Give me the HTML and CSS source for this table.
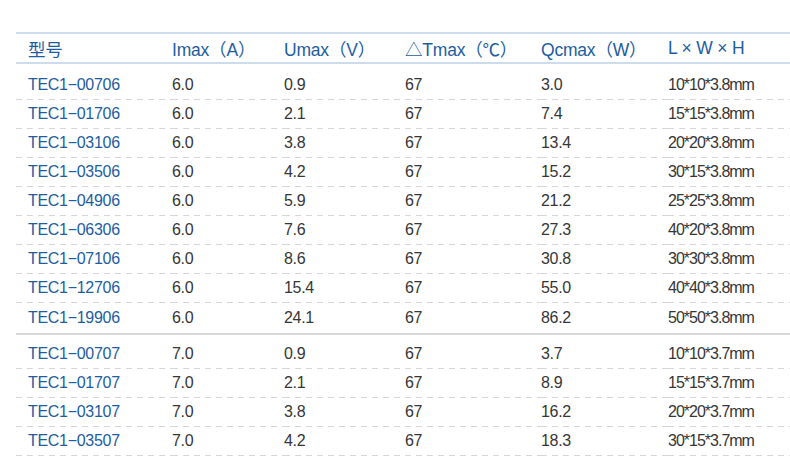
FILE: index.html
```html
<!DOCTYPE html>
<html lang="zh">
<head>
<meta charset="utf-8">
<title>TEC1 参数表</title>
<link rel="stylesheet" href="styles.css">
</head>
<body>
<table class="spec">
  <colgroup>
    <col class="c1"><col class="c2"><col class="c3"><col class="c4"><col class="c5"><col class="c6">
  </colgroup>
  <thead>
    <tr>
      <th>型号</th>
      <th>Imax（A）</th>
      <th>Umax（V）</th>
      <th>△Tmax（℃）</th>
      <th>Qcmax（W）</th>
      <th>L × W × H</th>
    </tr>
  </thead>
  <tbody class="group">
    <tr><td>TEC1−00706</td><td>6.0</td><td>0.9</td><td>67</td><td>3.0</td><td class="size">10*10*3.8mm</td></tr>
    <tr><td>TEC1−01706</td><td>6.0</td><td>2.1</td><td>67</td><td>7.4</td><td class="size">15*15*3.8mm</td></tr>
    <tr><td>TEC1−03106</td><td>6.0</td><td>3.8</td><td>67</td><td>13.4</td><td class="size">20*20*3.8mm</td></tr>
    <tr><td>TEC1−03506</td><td>6.0</td><td>4.2</td><td>67</td><td>15.2</td><td class="size">30*15*3.8mm</td></tr>
    <tr><td>TEC1−04906</td><td>6.0</td><td>5.9</td><td>67</td><td>21.2</td><td class="size">25*25*3.8mm</td></tr>
    <tr><td>TEC1−06306</td><td>6.0</td><td>7.6</td><td>67</td><td>27.3</td><td class="size">40*20*3.8mm</td></tr>
    <tr><td>TEC1−07106</td><td>6.0</td><td>8.6</td><td>67</td><td>30.8</td><td class="size">30*30*3.8mm</td></tr>
    <tr><td>TEC1−12706</td><td>6.0</td><td>15.4</td><td>67</td><td>55.0</td><td class="size">40*40*3.8mm</td></tr>
    <tr><td>TEC1−19906</td><td>6.0</td><td>24.1</td><td>67</td><td>86.2</td><td class="size">50*50*3.8mm</td></tr>
  </tbody>
  <tbody class="group">
    <tr><td>TEC1−00707</td><td>7.0</td><td>0.9</td><td>67</td><td>3.7</td><td class="size">10*10*3.7mm</td></tr>
    <tr><td>TEC1−01707</td><td>7.0</td><td>2.1</td><td>67</td><td>8.9</td><td class="size">15*15*3.7mm</td></tr>
    <tr><td>TEC1−03107</td><td>7.0</td><td>3.8</td><td>67</td><td>16.2</td><td class="size">20*20*3.7mm</td></tr>
    <tr><td>TEC1−03507</td><td>7.0</td><td>4.2</td><td>67</td><td>18.3</td><td class="size">30*15*3.7mm</td></tr>
  </tbody>
</table>
</body>
</html>
```
FILE: styles.css
```css
html, body {
  margin: 0;
  padding: 0;
  background: #ffffff;
}

body {
  padding-top: 32px;
  font-family: "Liberation Sans", Arial, "Noto Sans CJK SC", sans-serif;
}

.spec {
  margin-left: 16px;
  width: 774px;
  border-collapse: collapse;
  table-layout: fixed;
}

.c1 { width: 156px; }
.c2 { width: 112px; }
.c3 { width: 121px; }
.c4 { width: 136px; }
.c5 { width: 127px; }
.c6 { width: 122px; }

.spec thead th {
  border-top: 2px solid #cddcec;
  border-bottom: 2px solid #cddcec;
  height: 27px;
  padding: 1px 0 0 0;
  text-align: left;
  font-weight: normal;
  font-size: 17.5px;
  letter-spacing: -0.2px;
  color: #1d5da2;
  white-space: nowrap;
  vertical-align: middle;
}

.spec thead th:first-child,
.spec tbody td:first-child {
  padding-left: 12px;
}

.spec tbody td {
  height: 28px;
  padding: 0;
  font-size: 16px;
  letter-spacing: -0.3px;
  color: #363636;
  white-space: nowrap;
  vertical-align: middle;
  background-image: repeating-linear-gradient(to right, #d6d6d6 0 6px, transparent 6px 11px);
  background-size: 100% 1px;
  background-position: left bottom;
  background-repeat: no-repeat;
  border-bottom: 1px solid transparent;
  background-origin: border-box;
}

.spec tbody td:first-child {
  color: #1d5da2;
}

.spec tbody td.size {
  letter-spacing: -1px;
}

.spec tbody.group:first-of-type tr:first-child td {
  padding-top: 7px;
}

.spec tbody.group:first-of-type tr:last-child td {
  height: 30px;
  border-bottom: 2px solid #d9d9d9;
  background-image: none;
}

.spec tbody.group + tbody.group tr:first-child td {
  padding-top: 5px;
}
```
